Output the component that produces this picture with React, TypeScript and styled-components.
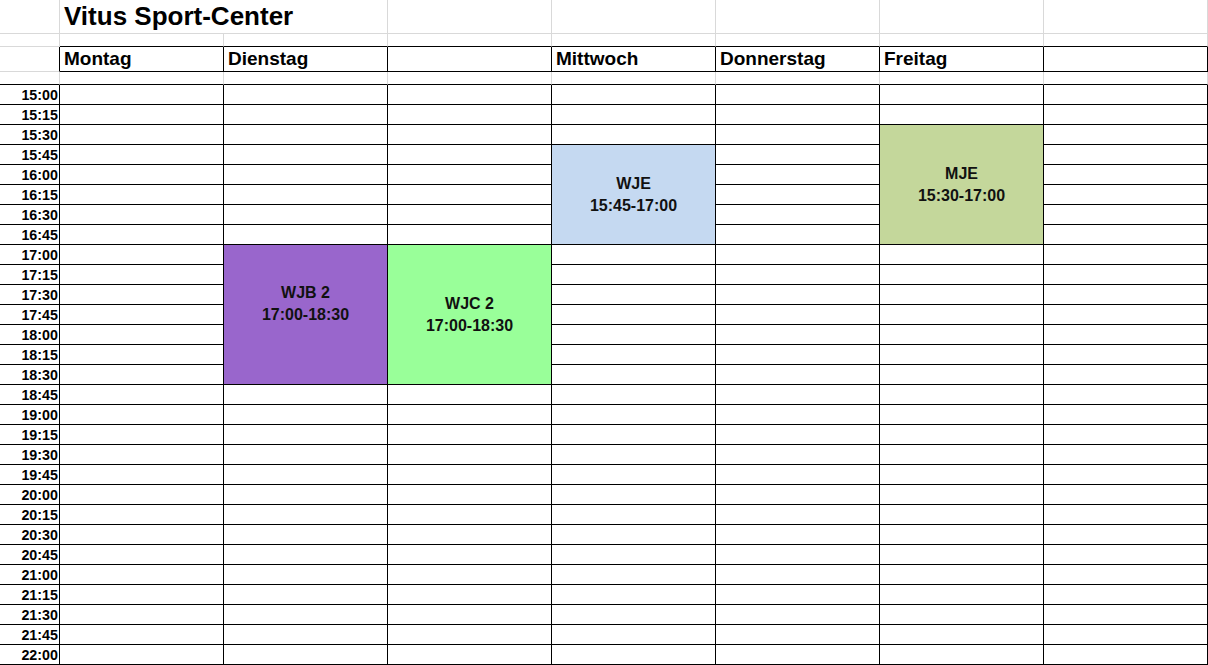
import React from "react";
import styled, { createGlobalStyle, css } from "styled-components";

const GlobalStyle = createGlobalStyle`
  html, body { margin: 0; padding: 0; background: #ffffff; }
  body { font-family: "Liberation Sans", Arial, sans-serif; }
`;

const GRID = "#d9d9d9";
const INK = "#000000";

const COL_W = 164;
const ROW_H = 20;

const days = ["Montag", "Dienstag", "", "Mittwoch", "Donnerstag", "Freitag", ""];

const times: string[] = [];
for (let m = 15 * 60; m <= 22 * 60; m += 15) {
  const h = Math.floor(m / 60);
  const mm = m % 60;
  times.push(`${h}:${mm.toString().padStart(2, "0")}`);
}

type Ev = { day: number; start: number; span: number; color: string; lines: string[] };

const events: Ev[] = [
  { day: 1, start: 8, span: 7, color: "#9966cc", lines: ["WJB 2", "17:00-18:30", ""] },
  { day: 2, start: 8, span: 7, color: "#99ff99", lines: ["WJC 2", "17:00-18:30"] },
  { day: 3, start: 3, span: 5, color: "#c5d9f1", lines: ["WJE", "15:45-17:00"] },
  { day: 5, start: 2, span: 6, color: "#c4d79b", lines: ["MJE", "15:30-17:00"] },
];

const Sheet = styled.div`
  display: grid;
  grid-template-columns: 60px repeat(7, ${COL_W}px);
  grid-template-rows: 34px 13px 25px 13px repeat(${times.length}, ${ROW_H}px);
  width: 1208px;
  height: 665px;
  overflow: hidden;
  background: #fff;
`;

type CellProps = {
  $row: number;
  $col: number;
  $rowSpan?: number;
  $colSpan?: number;
  $right?: "ink" | "grid";
  $bottom?: "ink" | "grid";
  $bg?: string;
};

const Cell = styled.div<CellProps>`
  box-sizing: border-box;
  grid-row: ${(p) => p.$row} / span ${(p) => p.$rowSpan ?? 1};
  grid-column: ${(p) => p.$col} / span ${(p) => p.$colSpan ?? 1};
  border-right: 1px solid ${(p) => (p.$right === "ink" ? INK : GRID)};
  border-bottom: 1px solid ${(p) => (p.$bottom === "ink" ? INK : GRID)};
  background: ${(p) => p.$bg ?? "transparent"};
  min-width: 0;
  overflow: hidden;
`;

const TitleCell = styled(Cell)`
  display: flex;
  align-items: flex-end;
  padding: 0 0 3px 4px;
  font-weight: 700;
  font-size: 26px;
  line-height: 28px;
  color: #000;
  white-space: nowrap;
`;

const DayHeader = styled(Cell)`
  display: flex;
  align-items: flex-end;
  padding: 0 0 1px 4px;
  font-weight: 700;
  font-size: 19px;
  line-height: 22px;
  color: #000;
  white-space: nowrap;
`;

const TimeLabel = styled(Cell)`
  display: flex;
  align-items: flex-end;
  justify-content: flex-end;
  padding: 0 1px 0 0;
  font-weight: 700;
  font-size: 14.3px;
  line-height: 18px;
  color: #000;
`;

const EventBlock = styled(Cell)`
  display: flex;
  flex-direction: column;
  align-items: center;
  justify-content: center;
  font-weight: 700;
  font-size: 16px;
  color: #111;
  text-align: center;
`;

const EventLine = styled.div<{ $empty?: boolean }>`
  height: 22px;
  line-height: 22px;
  white-space: nowrap;
  ${(p) =>
    p.$empty &&
    css`
      visibility: hidden;
    `}
`;

export default function App() {
  const cells: React.ReactNode[] = [];

  // Row 1: title row
  cells.push(<Cell key="t0" $row={1} $col={1} />);
  cells.push(
    <TitleCell key="title" $row={1} $col={2} $colSpan={2}>
      Vitus Sport-Center
    </TitleCell>
  );
  for (let c = 4; c <= 8; c++) cells.push(<Cell key={`t${c}`} $row={1} $col={c} />);

  // Row 2: gap above header
  cells.push(<Cell key="g0" $row={2} $col={1} />);
  for (let c = 2; c <= 8; c++) cells.push(<Cell key={`g${c}`} $row={2} $col={c} $bottom="ink" />);

  // Row 3: header
  cells.push(<Cell key="h0" $row={3} $col={1} $right="ink" />);
  days.forEach((d, i) =>
    cells.push(
      <DayHeader key={`h${i}`} $row={3} $col={i + 2} $right="ink" $bottom="ink">
        {d}
      </DayHeader>
    )
  );

  // Row 4: gap below header
  cells.push(<Cell key="s0" $row={4} $col={1} $bottom="ink" />);
  for (let c = 2; c <= 8; c++) cells.push(<Cell key={`s${c}`} $row={4} $col={c} $bottom="ink" />);

  // Schedule rows
  const covered = new Set<string>();
  events.forEach((e) => {
    for (let r = e.start; r < e.start + e.span; r++) covered.add(`${e.day}-${r}`);
  });

  times.forEach((t, r) => {
    const row = r + 5;
    cells.push(
      <TimeLabel key={`l${r}`} $row={row} $col={1} $right="ink" $bottom="ink">
        {t}
      </TimeLabel>
    );
    days.forEach((_, d) => {
      if (covered.has(`${d}-${r}`)) return;
      cells.push(<Cell key={`c${d}-${r}`} $row={row} $col={d + 2} $right="ink" $bottom="ink" />);
    });
  });

  events.forEach((e, i) => {
    cells.push(
      <EventBlock
        key={`e${i}`}
        $row={e.start + 5}
        $col={e.day + 2}
        $rowSpan={e.span}
        $right="ink"
        $bottom="ink"
        $bg={e.color}
      >
        {e.lines.map((l, j) => (
          <EventLine key={j} $empty={l === ""}>
            {l || "\u00a0"}
          </EventLine>
        ))}
      </EventBlock>
    );
  });

  return (
    <>
      <GlobalStyle />
      <Sheet>{cells}</Sheet>
    </>
  );
}
